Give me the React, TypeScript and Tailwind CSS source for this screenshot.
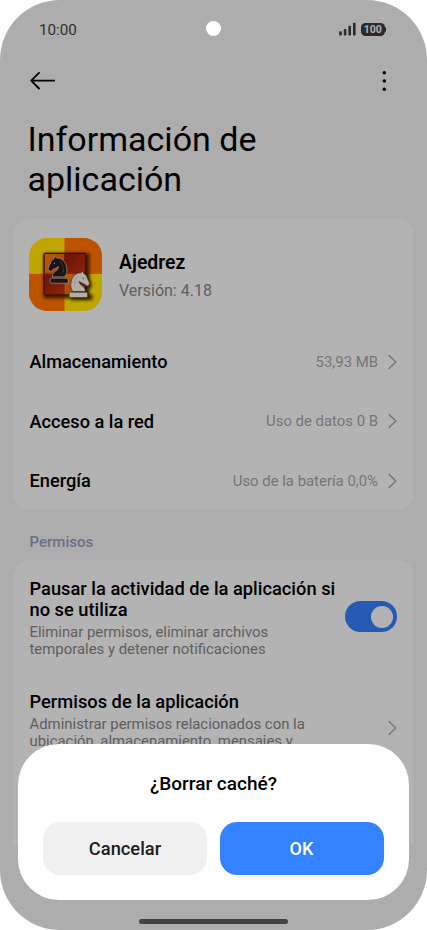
type RowProps = { label: string; value: string }

const rows: RowProps[] = [
  { label: 'Almacenamiento', value: '53,93 MB' },
  { label: 'Acceso a la red', value: 'Uso de datos 0 B' },
  { label: 'Energía', value: 'Uso de la batería 0,0%' },
]

export default function App() {
  return (
    <div className="h-[930px] w-[427px] overflow-hidden bg-white font-['Roboto',sans-serif]">
      <div className="relative h-full overflow-hidden rounded-[60px] bg-[#adadad]">
        <StatusBar />

        <header className="flex h-[50px] items-center justify-between pr-[38px] pl-[30px]">
          <BackIcon />
          <MoreIcon />
        </header>

        <h1 className="mt-[13px] ml-[27.5px] w-[260px] text-[34px] leading-[40px] text-black">
          Información de aplicación
        </h1>

        <main className="mt-[20px] mr-[13px] ml-[13px]">
          <section className="h-[291px] rounded-[18px] bg-[#b3b3b3] pt-[19px] pr-[17px] pl-[16px]">
            <div className="flex items-center gap-[17px]">
              <ChessIcon />
              <div className="pt-[4px]">
                <p className="text-[19.4px] leading-[26px] font-semibold text-black">Ajedrez</p>
                <p className="mt-[3px] text-[16px] leading-[24px] text-[#5e5e5e]">Versión: 4.18</p>
              </div>
            </div>
            <div className="mt-[21px]">
              {rows.map((row) => (
                <Row key={row.label} {...row} />
              ))}
            </div>
          </section>

          <h2 className="mt-[22px] ml-[16.5px] text-[15px] leading-[20px] font-medium text-[#6c6f84]">
            Permisos
          </h2>

          <section className="mt-[8px] h-[285px] rounded-t-[18px] bg-[#b3b3b3] pt-[17.5px] pr-[17px] pl-[16.5px]">
            <div className="flex items-center justify-between">
              <div>
                <p className="w-[312px] text-[18.3px] leading-[21px] font-medium text-black">
                  Pausar la actividad de la aplicación si no se utiliza
                </p>
                <p className="mt-[4px] w-[270px] text-[14.9px] leading-[17.5px] text-[#5e5e5e]">
                  Eliminar permisos, eliminar archivos temporales y detener notificaciones
                </p>
              </div>
              <Toggle />
            </div>
            <div className="mt-[32px] flex items-center justify-between">
              <div className="pb-[15px]">
                <p className="text-[18.3px] leading-[21px] font-medium text-black">
                  Permisos de la aplicación
                </p>
                <p className="mt-[4px] w-[290px] text-[14.9px] leading-[17.5px] text-[#5e5e5e]">
                  Administrar permisos relacionados con la ubicación, almacenamiento, mensajes y
                </p>
              </div>
              <Chevron />
            </div>
          </section>
        </main>

        {/* Dialog */}
        <div className="absolute top-[744px] left-[18px] h-[156px] w-[391px] rounded-[41px] bg-white px-[25px] pt-[28px]">
          <p className="text-center text-[19px] leading-[24px] font-medium text-black">¿Borrar caché?</p>
          <div className="mt-[25.5px] flex gap-[12.5px]">
            <button className="h-[53px] w-[164px] rounded-[17px] bg-[#f0f0f0] pt-px text-[18.3px] font-medium text-[#1c1c1c]">
              Cancelar
            </button>
            <button className="h-[53px] w-[164px] rounded-[17px] bg-[#3482ff] text-[18px] font-medium text-white">
              OK
            </button>
          </div>
        </div>

        {/* Home indicator */}
        <div className="absolute top-[919px] left-[139px] h-[5px] w-[149px] rounded-full bg-[#424242]" />
      </div>
    </div>
  )
}

function StatusBar() {
  return (
    <div className="flex h-[56px] items-center justify-between pt-px pr-[41px] pl-[39px]">
      <span className="w-[60px] pt-[2px] text-[15.2px] leading-[20px] text-[#2e2e2e]">10:00</span>
      <span className="ml-px size-[15px] rounded-full bg-white" />
      <span className="flex w-[60px] items-center justify-end gap-[5px] pt-px">
        <svg width="17" height="14" viewBox="0 0 17 14" fill="#2b2b2b">
          <rect x="0.2" y="9.3" width="2.6" height="4.2" rx="0.8" />
          <rect x="4.8" y="7" width="2.6" height="6.5" rx="0.8" />
          <rect x="9.4" y="3.7" width="2.6" height="9.8" rx="0.8" />
          <rect x="14" y="0.7" width="2.6" height="12.8" rx="0.8" />
        </svg>
        <span className="flex items-center">
          <span className="flex h-[13px] w-[23.5px] items-center justify-center rounded-[4.5px] bg-[#2b2b2b] pt-px text-[10.5px] leading-[12px] font-bold text-[#b3b3b3]">
            100
          </span>
          <span className="h-[5px] w-[1.5px] rounded-r-[2px] bg-[#2b2b2b]" />
        </span>
      </span>
    </div>
  )
}

function Row({ label, value }: RowProps) {
  return (
    <div className="flex h-[59.5px] items-center">
      <span className="flex-1 pl-[0.5px] text-[18.2px] font-medium text-black">{label}</span>
      <span className="mr-[9px] text-[14.9px] text-[#757575]">{value}</span>
      <Chevron />
    </div>
  )
}

function Toggle() {
  return (
    <span className="mb-[3px] flex h-[31px] w-[52px] shrink-0 items-center justify-end rounded-full bg-[#255bb5] pr-[4px]">
      <span className="size-[22px] rounded-full bg-[#b3b3b3]" />
    </span>
  )
}

function Chevron() {
  return (
    <svg width="10" height="16" viewBox="0 0 10 16" fill="none" stroke="#757575" strokeWidth="1.4">
      <path d="M1.6 1l7.2 7L1.6 15" />
    </svg>
  )
}

function BackIcon() {
  return (
    <svg
      width="26"
      height="18"
      viewBox="0 0 26 18"
      fill="none"
      stroke="#000"
      strokeWidth="1.8"
      strokeLinecap="round"
      strokeLinejoin="round"
    >
      <path d="M24.2 8.6H1.2M9 0.9L1.2 8.6L9 16.5" />
    </svg>
  )
}

function MoreIcon() {
  return (
    <svg width="10" height="20" viewBox="0 0 10 20" fill="#000">
      <circle cx="5.3" cy="1.8" r="1.7" />
      <circle cx="5.3" cy="10" r="1.7" />
      <circle cx="5.3" cy="18.2" r="1.7" />
    </svg>
  )
}

const knight =
  'M21 0L28 6C43 5 54 17 57 32C60 44 58 53 52 62H15C14 54 18 49 25 44C31 40 33 36 33 31C28 36 22 37 17 40L10 46L3 42C0 36 6 29 9 21C11 14 14 10 20 8Z'

function ChessIcon() {
  return (
    <svg width="73" height="73" viewBox="0 0 218 218">
      <defs>
        <clipPath id="tile">
          <rect width="218" height="218" rx="54" />
        </clipPath>
        <linearGradient id="amber" x1="0" y1="0" x2="1" y2="1">
          <stop offset="0" stopColor="#b85a0a" />
          <stop offset="1" stopColor="#a83c05" />
        </linearGradient>
        <linearGradient id="wine" x1="0" y1="0" x2="1" y2="1">
          <stop offset="0" stopColor="#6d1206" />
          <stop offset="1" stopColor="#8c2408" />
        </linearGradient>
        <filter id="soft" x="-20%" y="-20%" width="150%" height="150%">
          <feGaussianBlur stdDeviation="4" />
        </filter>
      </defs>
      <g clipPath="url(#tile)">
        <rect width="218" height="218" fill="#bfa500" />
        <rect x="106" width="112" height="107" fill="#bd5200" />
        <rect y="107" width="106" height="111" fill="#bd5200" />
        <rect x="43" y="45" width="138" height="136" rx="8" fill="#2a1000" opacity="0.8" filter="url(#soft)" />
        <rect x="43" y="44" width="128" height="128" rx="7" fill="#3c1404" />
        <rect x="47" y="48" width="59" height="59" fill="url(#amber)" />
        <rect x="106" y="48" width="61" height="59" fill="url(#wine)" />
        <rect x="47" y="107" width="59" height="61" fill="url(#wine)" />
        <rect x="106" y="107" width="61" height="61" fill="url(#amber)" />
        {/* black knight */}
        <g transform="translate(55 54)" fill="#1c1412" stroke="#a59a92" strokeWidth="2" strokeLinejoin="round">
          <path d={knight} />
          <rect x="8" y="66" width="54" height="15" rx="4" />
          <path d="M36 15C45 22 49 34 46 50" fill="none" stroke="#5b4d46" />
          <circle cx="21" cy="22" r="1.8" fill="#a59a92" stroke="none" />
        </g>
        {/* white knight, facing right */}
        <path
          transform="translate(190 104) scale(-1 1)"
          d={knight}
          fill="#140a04"
          opacity="0.7"
          filter="url(#soft)"
        />
        <rect x="126" y="168" width="64" height="18" fill="#140a04" opacity="0.7" filter="url(#soft)" />
        <g
          transform="translate(183 98) scale(-1 1)"
          fill="#b3afa8"
          stroke="#3b332c"
          strokeWidth="2"
          strokeLinejoin="round"
        >
          <path d={knight} />
          <rect x="8" y="64" width="55" height="16" rx="4" />
          <path d="M36 15C45 22 49 34 46 50" fill="none" stroke="#8a847c" />
          <circle cx="21" cy="22" r="2" fill="#3b332c" stroke="none" />
        </g>
      </g>
    </svg>
  )
}
